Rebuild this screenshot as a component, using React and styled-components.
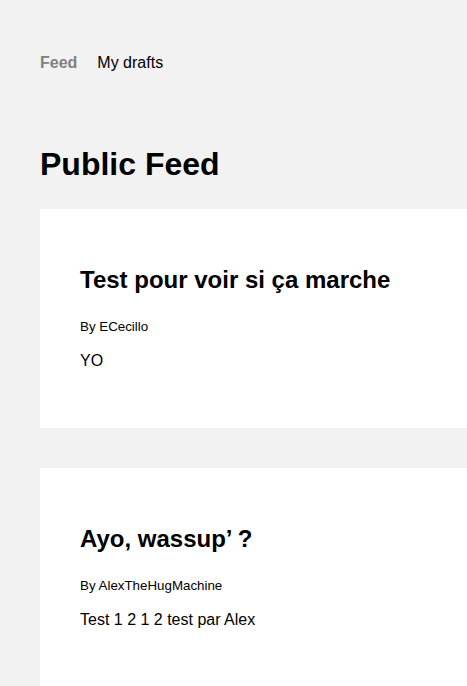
import React from 'react';
import styled, { createGlobalStyle } from 'styled-components';

const posts = [
  { id: 1, title: 'Test pour voir si ça marche', author: 'ECecillo', content: 'YO' },
  { id: 2, title: 'Ayo, wassup’ ?', author: 'AlexTheHugMachine', content: 'Test 1 2 1 2 test par Alex' },
];

const GlobalStyle = createGlobalStyle`
  html, body {
    margin: 0;
    padding: 0;
    overflow-x: hidden;
  }
  body {
    background: #f2f2f2;
    font-family: "Liberation Sans", Arial, Helvetica, sans-serif;
    font-size: 16px;
    color: #000;
  }
`;

const App = () => (
  <>
    <GlobalStyle />
    <Nav>
      <NavLink href="#" $active>Feed</NavLink>
      <NavLink href="#">My drafts</NavLink>
    </Nav>
    <Main>
      <Title>Public Feed</Title>
      <Feed>
        {posts.map((post) => (
          <Post key={post.id}>
            <PostTitle>{post.title}</PostTitle>
            <Byline>By {post.author}</Byline>
            <Body>{post.content}</Body>
          </Post>
        ))}
      </Feed>
    </Main>
  </>
);

const Nav = styled.nav`
  display: flex;
  align-items: center;
  gap: 20px;
  padding: 53.6px 40px 0 40px;
  line-height: 18.4px;
`;

const NavLink = styled.a`
  text-decoration: none;
  color: ${(p) => (p.$active ? '#808080' : '#000')};
  font-weight: ${(p) => (p.$active ? 700 : 400)};
`;

const Main = styled.main`
  padding: 0 0 0 40px;
`;

const Title = styled.h1`
  font-size: 32px;
  font-weight: 700;
  line-height: 36.8px;
  margin: 73.5px 0 26.7px 0;
`;

const Feed = styled.div`
  display: flex;
  flex-direction: column;
  gap: 40px;
`;

const Post = styled.article`
  background: #fff;
  padding: 57px 40px 57.6px 40px;
`;

const PostTitle = styled.h2`
  font-size: 24px;
  font-weight: 700;
  line-height: 27.6px;
  margin: 0;
`;

const Byline = styled.p`
  font-size: 13.33px;
  line-height: 18.4px;
  margin: 24.3px 0 0 0;
`;

const Body = styled.p`
  font-size: 16px;
  line-height: 18.4px;
  margin: 15.7px 0 0 0;
`;

export default App;
